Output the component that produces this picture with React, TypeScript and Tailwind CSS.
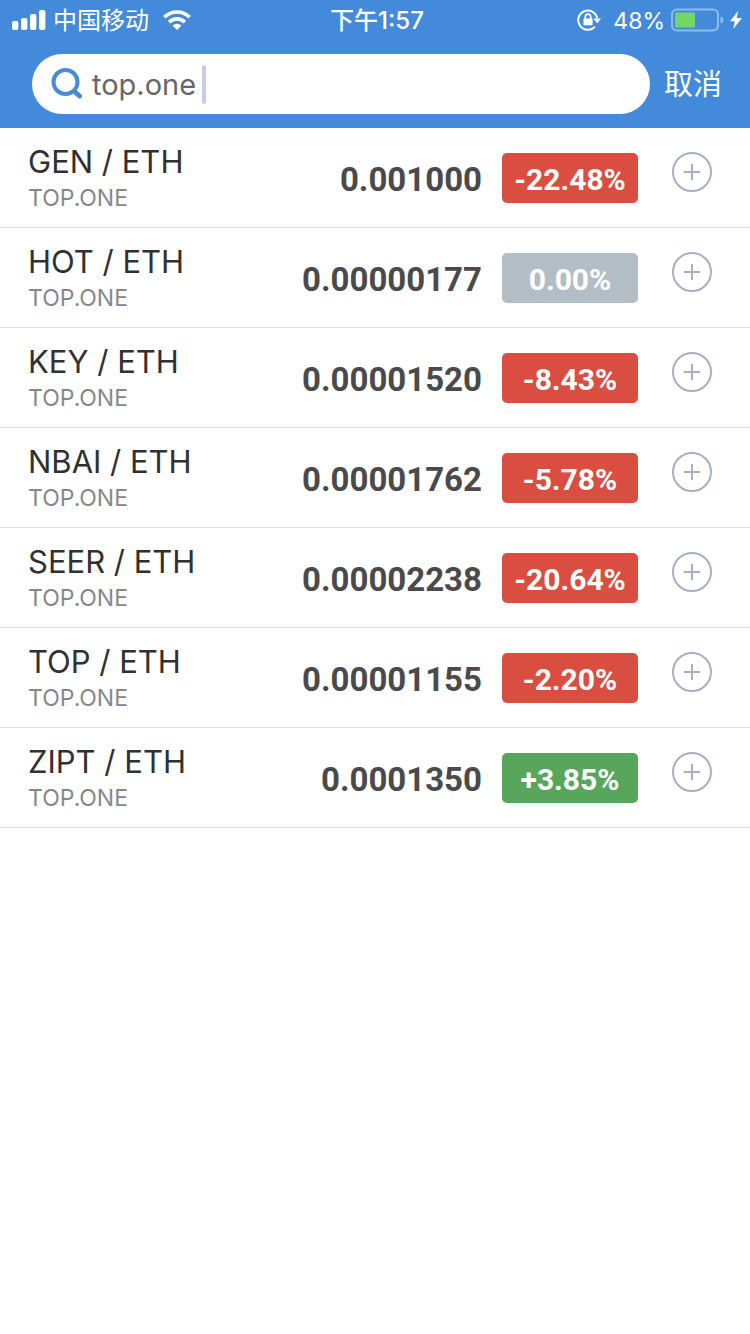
import { useState } from "react";

type Pair = {
  base: string;
  quote: string;
  exchange: string;
  price: string;
  change: string;
};

const pairs: Pair[] = [
  { base: "GEN", quote: "ETH", exchange: "TOP.ONE", price: "0.001000", change: "-22.48%" },
  { base: "HOT", quote: "ETH", exchange: "TOP.ONE", price: "0.00000177", change: "0.00%" },
  { base: "KEY", quote: "ETH", exchange: "TOP.ONE", price: "0.00001520", change: "-8.43%" },
  { base: "NBAI", quote: "ETH", exchange: "TOP.ONE", price: "0.00001762", change: "-5.78%" },
  { base: "SEER", quote: "ETH", exchange: "TOP.ONE", price: "0.00002238", change: "-20.64%" },
  { base: "TOP", quote: "ETH", exchange: "TOP.ONE", price: "0.00001155", change: "-2.20%" },
  { base: "ZIPT", quote: "ETH", exchange: "TOP.ONE", price: "0.0001350", change: "+3.85%" },
];

function changeColor(change: string) {
  if (change.startsWith("-")) return "bg-[#d94e41]";
  if (change.startsWith("+")) return "bg-[#57a65b]";
  return "bg-[#b2bdc6]";
}

function SignalIcon() {
  return (
    <svg width="34" height="20" viewBox="0 0 34 20" fill="currentColor" aria-hidden="true">
      <rect x="0" y="11" width="6.4" height="9" rx="2" />
      <rect x="9" y="8" width="6.4" height="12" rx="2" />
      <rect x="18" y="4" width="6.4" height="16" rx="2" />
      <rect x="27" y="0" width="6.4" height="20" rx="2" />
    </svg>
  );
}

function WifiIcon() {
  return (
    <svg width="28" height="20" viewBox="0 0 28 20" aria-hidden="true">
      <g fill="none" stroke="currentColor" strokeWidth="3.6">
        <path d="M1.3 7.3a18 18 0 0 1 25.4 0" />
        <path d="M6.1 12.1a11.2 11.2 0 0 1 15.8 0" />
      </g>
      <path d="M9.5 15.5a6.4 6.4 0 0 1 9 0L14 20z" fill="currentColor" />
    </svg>
  );
}

function RotationLockIcon() {
  return (
    <svg width="24" height="22" viewBox="0 0 24 22" fill="none" aria-hidden="true">
      <path d="M18 17.6A9.6 9.6 0 1 1 20.2 9" stroke="currentColor" strokeWidth="2" />
      <path d="M16.4 9.4H24L20.2 14.4z" fill="currentColor" />
      <rect x="6.4" y="9.4" width="9.2" height="6.8" rx="1" fill="currentColor" />
      <path d="M8.3 10V7.8a2.7 2.7 0 0 1 5.4 0V10" stroke="currentColor" strokeWidth="1.7" />
    </svg>
  );
}

function BatteryIcon() {
  return (
    <svg width="53" height="24" viewBox="0 0 53 24" fill="none" aria-hidden="true">
      <rect x="1" y="1.5" width="46" height="21" rx="5" stroke="#8fbcee" strokeWidth="2" />
      <rect x="4" y="4.5" width="20" height="15" rx="1" fill="#71d867" />
      <path d="M49.5 8.5c4 1 4 6 0 7z" fill="#8fbcee" />
    </svg>
  );
}

function BoltIcon() {
  return (
    <svg width="12" height="18" viewBox="0 0 12 18" fill="currentColor" aria-hidden="true">
      <path d="M8 0 0 10.2h4.8L3.2 18 12 7H6.8z" />
    </svg>
  );
}

function SearchIcon() {
  return (
    <svg
      width="32"
      height="32"
      viewBox="0 0 32 32"
      fill="none"
      stroke="#4a8bd8"
      strokeLinecap="round"
      aria-hidden="true"
    >
      <circle cx="14.5" cy="14" r="12" strokeWidth="4" />
      <path d="m23.5 23.5 5 4.5" strokeWidth="5" />
    </svg>
  );
}

function StatusBar() {
  return (
    <div className="grid h-10 grid-cols-[1fr_auto_1fr] items-center pr-2 pl-3 text-2xl">
      <div className="flex items-center">
        <SignalIcon />
        <span className="ml-[7px] pt-0.5">中国移动</span>
        <span className="ml-[14px]">
          <WifiIcon />
        </span>
      </div>
      <div className="pt-0.5 font-medium">下午1:57</div>
      <div className="flex items-center justify-end">
        <RotationLockIcon />
        <span className="mr-[6px] ml-3 pt-0.5 text-[23px]">48%</span>
        <BatteryIcon />
        <span className="ml-[6px]">
          <BoltIcon />
        </span>
      </div>
    </div>
  );
}

function PairRow({ pair }: { pair: Pair }) {
  return (
    <li className="flex h-[100px] items-center pr-[38px] pl-7 shadow-[inset_0_-1px_0_#dcdde0]">
      <div className="flex-1">
        <div className="text-[31px] leading-10 text-[#303033]">
          {pair.base} / {pair.quote}
        </div>
        <div className="text-[23px] leading-8 text-[#86878b]">{pair.exchange}</div>
      </div>
      <div className="pt-1 font-[Roboto,sans-serif] text-[33px] font-bold text-[#4a4a4c]">{pair.price}</div>
      <div
        className={`ml-5 flex h-[50px] w-[136px] items-center justify-center rounded-[5px] pt-0.5 font-[Roboto,sans-serif] text-[30px] font-bold text-white ${changeColor(pair.change)}`}
      >
        {pair.change}
      </div>
      <button
        type="button"
        aria-label={`Add ${pair.base} / ${pair.quote}`}
        className="mb-3 ml-[34px] text-[#a9afc8]"
      >
        <svg width="40" height="40" viewBox="0 0 40 40" fill="none" stroke="currentColor" strokeWidth="2">
          <circle cx="20" cy="20" r="19" />
          <path d="M12 20h16M20 12v16" />
        </svg>
      </button>
    </li>
  );
}

export default function App() {
  const [query, setQuery] = useState("top.one");

  return (
    <div className="min-h-screen bg-white font-[Inter,'Noto_Sans_CJK_SC',sans-serif]">
      <header className="bg-[#448adb] text-white">
        <StatusBar />
        <form className="flex items-center py-[14px] pr-7 pl-8" onSubmit={(e) => e.preventDefault()}>
          <label className="flex h-[60px] flex-1 items-center rounded-full bg-white pl-[19px]">
            <SearchIcon />
            <input
              type="text"
              aria-label="搜索"
              value={query}
              onChange={(e) => setQuery(e.target.value)}
              className="ml-[9px] field-sizing-content pt-0.5 text-[29px] text-[#666668] caret-transparent outline-none"
            />
            <span className="ml-[6px] h-[39px] w-1 rounded-sm bg-[#c5c9f3]" />
          </label>
          <button type="button" className="ml-[14px] pt-0.5 text-[29px]">
            取消
          </button>
        </form>
      </header>
      <ul>
        {pairs.map((pair) => (
          <PairRow key={pair.base} pair={pair} />
        ))}
      </ul>
    </div>
  );
}
